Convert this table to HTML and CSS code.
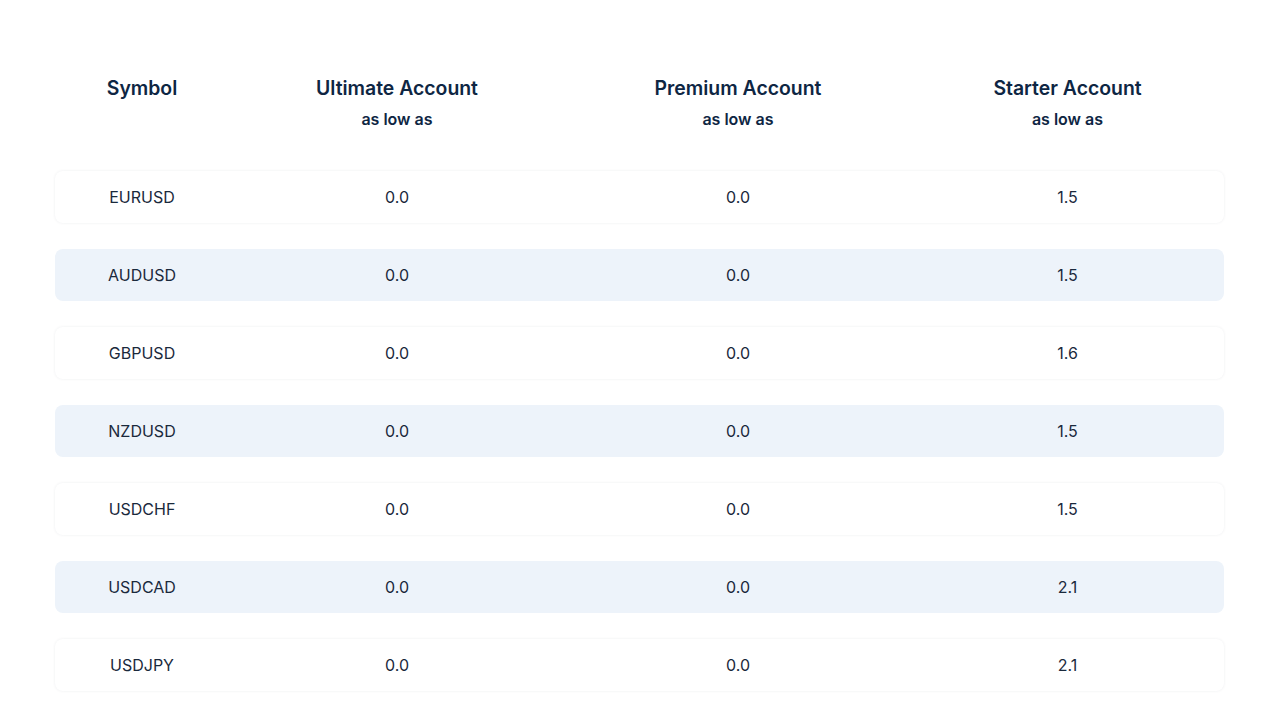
FILE: index.html
```html
<!DOCTYPE html>
<html>
<head>
<meta charset="utf-8">
<link rel="stylesheet" href="styles.css">
</head>
<body>
<div class="table">
  <div class="head">
    <div class="hcell"><div class="title">Symbol</div></div>
    <div class="hcell"><div class="title">Ultimate Account</div><div class="sub">as low as</div></div>
    <div class="hcell"><div class="title">Premium Account</div><div class="sub">as low as</div></div>
    <div class="hcell"><div class="title">Starter Account</div><div class="sub">as low as</div></div>
  </div>
  <div class="rows">
    <div class="row white"><div>EURUSD</div><div>0.0</div><div>0.0</div><div>1.5</div></div>
    <div class="row blue"><div>AUDUSD</div><div>0.0</div><div>0.0</div><div>1.5</div></div>
    <div class="row white"><div>GBPUSD</div><div>0.0</div><div>0.0</div><div>1.6</div></div>
    <div class="row blue"><div>NZDUSD</div><div>0.0</div><div>0.0</div><div>1.5</div></div>
    <div class="row white"><div>USDCHF</div><div>0.0</div><div>0.0</div><div>1.5</div></div>
    <div class="row blue"><div>USDCAD</div><div>0.0</div><div>0.0</div><div>2.1</div></div>
    <div class="row white"><div>USDJPY</div><div>0.0</div><div>0.0</div><div>2.1</div></div>
  </div>
</div>
</body>
</html>
```
FILE: styles.css
```css
* { box-sizing: border-box; }
html, body { margin: 0; padding: 0; background: #ffffff; }
body {
  font-family: Inter, "Noto Sans", sans-serif;
  color: #1c2b3d;
  width: 1276px;
  height: 720px;
  overflow: hidden;
}
.table {
  padding: 75px 52px 0 55px;
}
.head, .row {
  display: grid;
  grid-template-columns: 174px 336px 346px 313px;
  text-align: center;
}
.head {
  height: 96px;
}
.title {
  font-size: 19.4px;
  font-weight: 600;
  color: #0e2643;
  line-height: 26px;
}
.sub {
  font-size: 16px;
  font-weight: 600;
  color: #0e2643;
  line-height: 20px;
  margin-top: 8px;
}
.rows {
  display: flex;
  flex-direction: column;
  gap: 26px;
}
.row {
  height: 52px;
  align-items: center;
  border-radius: 8px;
  font-size: 16px;
  color: #1a293c;
}
.row.white {
  background: #ffffff;
  box-shadow: 0 0 3px rgba(20, 40, 70, 0.08);
}
.row.blue {
  background: #edf3fa;
}
```
